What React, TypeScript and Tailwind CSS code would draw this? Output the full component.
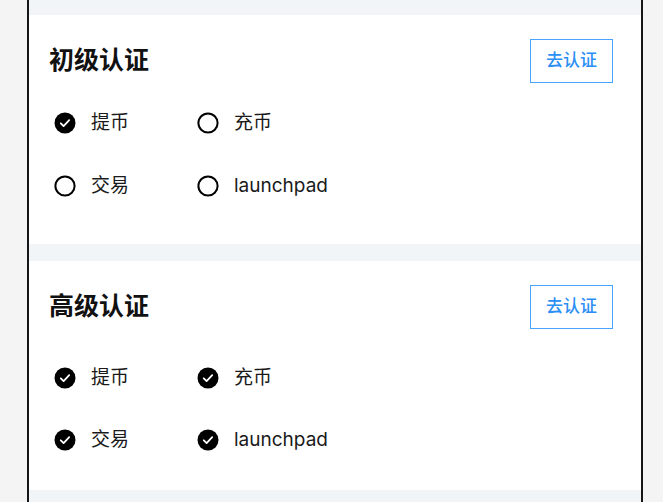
import React from 'react';

type Item = { label: string; done: boolean };

const font = { fontFamily: 'Inter, "Noto Sans CJK SC", sans-serif' };

function CheckIcon({ done }: { done: boolean }) {
  if (done) {
    return (
      <svg width="22" height="22" viewBox="0 0 22 22" className="shrink-0">
        <circle cx="11" cy="11" r="10.5" fill="#000" />
        <path d="M6.8 11.3 L9.6 14.1 L15.2 8.1" fill="none" stroke="#fff" strokeWidth="1.8" strokeLinecap="round" strokeLinejoin="round" />
      </svg>
    );
  }
  return (
    <svg width="22" height="22" viewBox="0 0 22 22" className="shrink-0">
      <circle cx="11" cy="11" r="9.6" fill="none" stroke="#000" strokeWidth="2" />
    </svg>
  );
}

function AuthCard({ title, items, listClass }: { title: string; items: Item[]; listClass: string }) {
  return (
    <div className="h-[229px] bg-white pl-[20px] pr-[28px] pt-[24px]">
      <div className="flex h-[44px] items-center justify-between">
        <h2 className="text-[25px] font-bold text-[#111]">{title}</h2>
        <button className="h-[44px] w-[83px] border border-[#4aa3ff] text-[17px] font-medium text-[#2b8ef5]">
          去认证
        </button>
      </div>
      <div className={`grid grid-cols-[143px_1fr] pl-[5px] ${listClass}`}>
        {items.map((it) => (
          <div key={it.label} className="flex h-[40px] items-center gap-[15px]">
            <CheckIcon done={it.done} />
            <span className="text-[19px] text-[#1a1a1a]">{it.label}</span>
          </div>
        ))}
      </div>
    </div>
  );
}

export default function App() {
  return (
    <div className="h-[502px] w-[663px] overflow-hidden bg-[#f4f4f4]" style={font}>
      <div className="ml-[27px] h-full w-[616px] border-x-2 border-[#161616] bg-[#f2f5f8] pt-[15px]">
        <div className="flex flex-col gap-[17px]">
          <AuthCard
            title="初级认证"
            listClass="mt-[20px] gap-y-[23px]"
            items={[
              { label: '提币', done: true },
              { label: '充币', done: false },
              { label: '交易', done: false },
              { label: 'launchpad', done: false },
            ]}
          />
          <AuthCard
            title="高级认证"
            listClass="mt-[29px] gap-y-[22px]"
            items={[
              { label: '提币', done: true },
              { label: '充币', done: true },
              { label: '交易', done: true },
              { label: 'launchpad', done: true },
            ]}
          />
        </div>
      </div>
    </div>
  );
}
